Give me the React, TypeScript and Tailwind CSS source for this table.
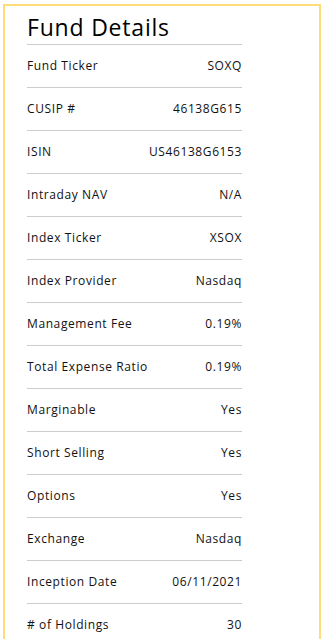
const rows: [string, string][] = [
  ["Fund Ticker", "SOXQ"],
  ["CUSIP #", "46138G615"],
  ["ISIN", "US46138G6153"],
  ["Intraday NAV", "N/A"],
  ["Index Ticker", "XSOX"],
  ["Index Provider", "Nasdaq"],
  ["Management Fee", "0.19%"],
  ["Total Expense Ratio", "0.19%"],
  ["Marginable", "Yes"],
  ["Short Selling", "Yes"],
  ["Options", "Yes"],
  ["Exchange", "Nasdaq"],
  ["Inception Date", "06/11/2021"],
  ["# of Holdings", "30"],
];

export default function App() {
  return (
    <div className="h-[639px] overflow-hidden bg-white pl-[3px] pt-[4px]" style={{ fontFamily: '"Open Sans", "DejaVu Sans", sans-serif' }}>
      <div className="w-[318px] border-2 border-[#fedc7a] pl-[22px] pb-4">
        <h2 className="w-[215px] border-b border-[#cccccc] pt-[7px] pb-[3px] text-[23px] leading-[28px] tracking-[0.8px] text-black">
          Fund Details
        </h2>
        {rows.map(([label, value]) => (
          <div
            key={label}
            className="flex h-[43px] w-[215px] items-center justify-between border-b border-[#cccccc] text-[12px] tracking-[0.6px] text-[#111]"
          >
            <span>{label}</span>
            <span>{value}</span>
          </div>
        ))}
      </div>
    </div>
  );
}
